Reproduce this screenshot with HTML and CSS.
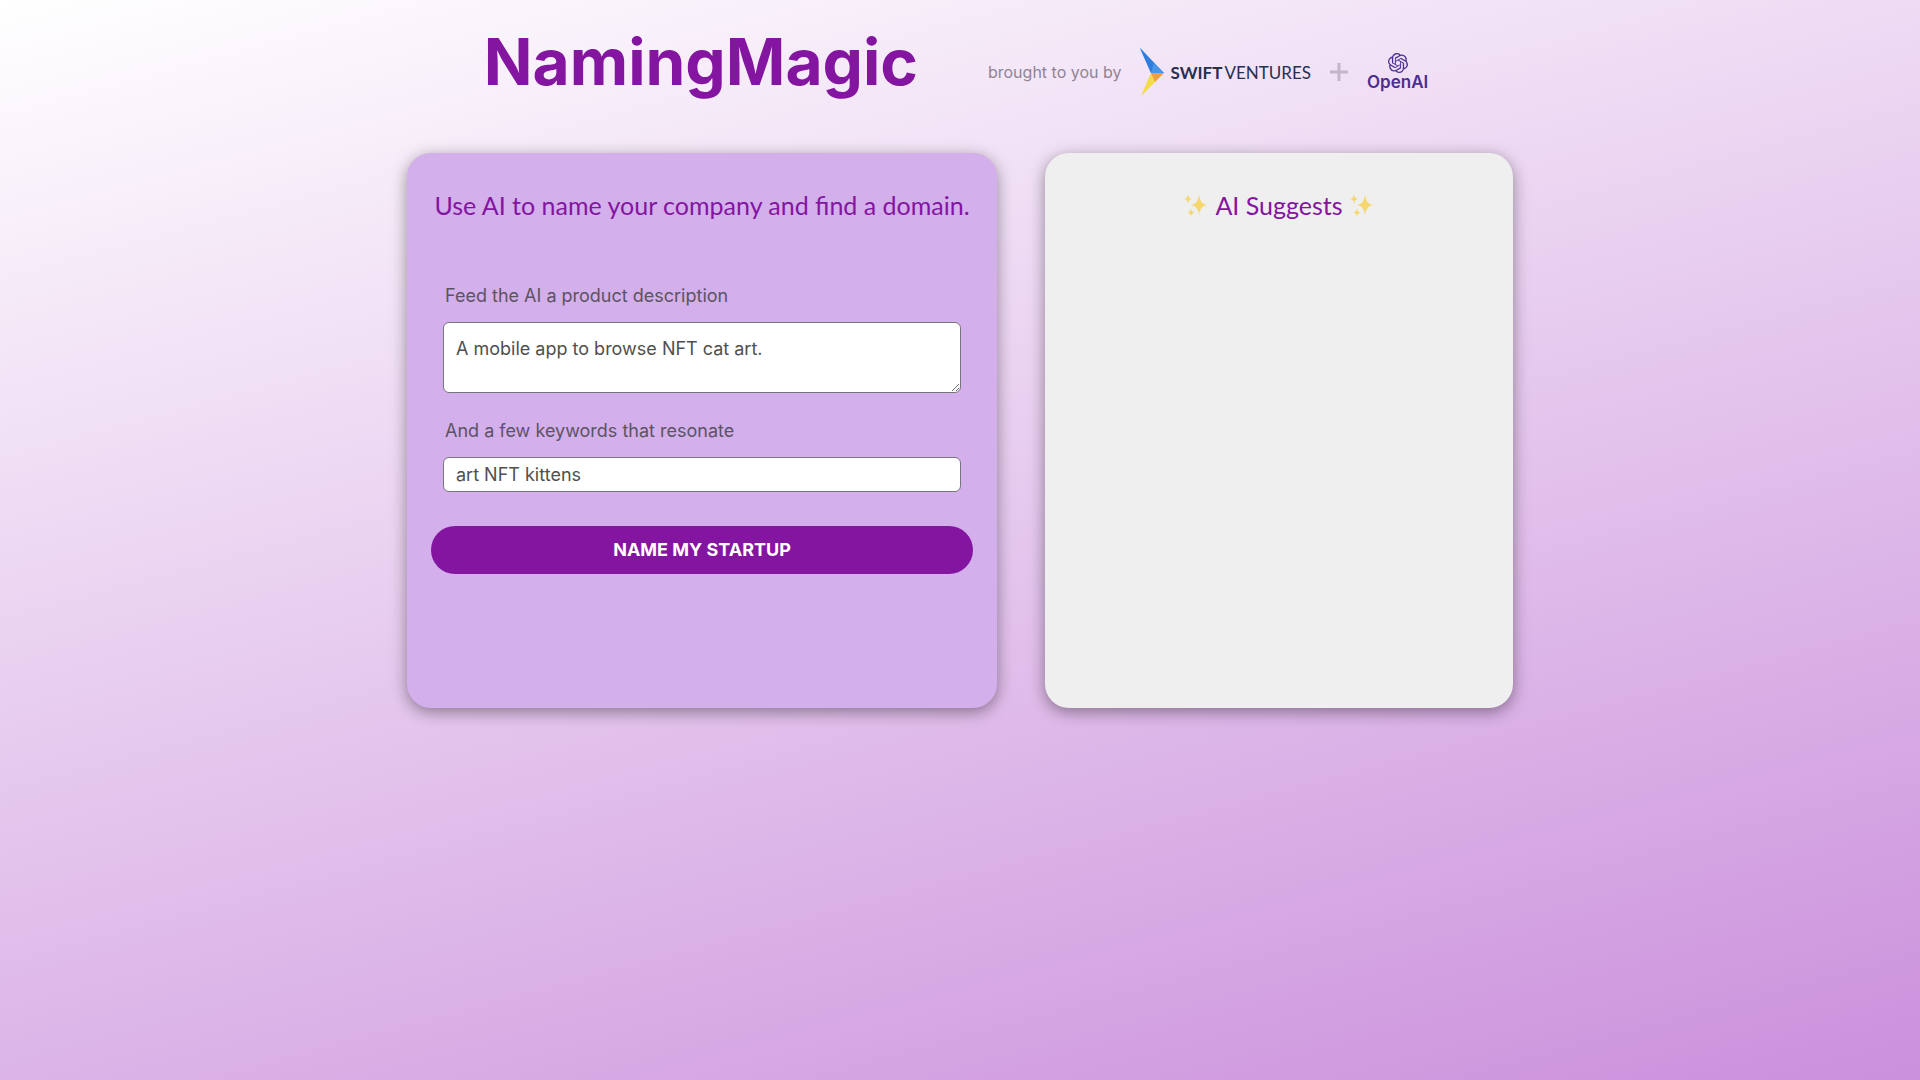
FILE: index.html
```html
<!DOCTYPE html>
<html lang="en">
<head>
<meta charset="utf-8">
<meta name="viewport" content="width=device-width, initial-scale=1">
<title>NamingMagic</title>
<link rel="stylesheet" href="styles.css">
</head>
<body>
<svg class="defs" aria-hidden="true">
  <symbol id="sparkles" viewBox="0 0 24 24">
    <path fill="#f5d76e" d="M15 1Q15.500 11 23 12Q15.500 13 15 23Q14.500 13 7 12Q14.500 11 15 1ZM4 1Q4.300 5.300 8 6Q4.300 6.700 4 11Q3.700 6.700 0 6Q3.700 5.300 4 1ZM7 15Q7.300 18.800 10.500 19.500Q7.300 20.200 7 24Q6.700 20.200 3.500 19.500Q6.700 18.800 7 15Z"/>
  </symbol>
</svg>
<div class="page">
  <header class="header">
    <h1 class="brand">NamingMagic</h1>
    <div class="sponsors">
      <span class="byline">brought to you by</span>
      <a class="swift" href="#">
        <svg class="swift-mark" viewBox="0 0 24 48" aria-hidden="true">
          <path fill="#3b8ae6" d="M0 0L24 25H11Z"/>
          <path fill="#2f7ddd" d="M0 0L14 15L11 25Z"/>
          <path fill="#4796ea" d="M14 15L24 25H11Z"/>
          <path fill="#f3dc45" d="M11 25L1 48L16 33Z"/>
          <path fill="#e9a23c" d="M11 25H24L15 34Z"/>
        </svg>
        <span class="swift-name"><b>SWIFT</b><span>VENTURES</span></span>
      </a>
      <svg class="plus" viewBox="0 0 18 18" aria-hidden="true"><path d="M9 0V18M0 9H18" stroke="#c4b5ca" stroke-width="3"/></svg>
      <a class="openai" href="#">
        <svg class="openai-mark" viewBox="0 0 24 24" aria-hidden="true"><path fill="currentColor" d="M22.2819 9.8211a5.9847 5.9847 0 0 0-.5157-4.9108 6.0462 6.0462 0 0 0-6.5098-2.9A6.0651 6.0651 0 0 0 4.9807 4.1818a5.9847 5.9847 0 0 0-3.9977 2.9 6.0462 6.0462 0 0 0 .7427 7.0966 5.98 5.98 0 0 0 .511 4.9107 6.051 6.051 0 0 0 6.5146 2.9001A5.9847 5.9847 0 0 0 13.2599 24a6.0557 6.0557 0 0 0 5.7718-4.2058 5.9894 5.9894 0 0 0 3.9977-2.9001 6.0557 6.0557 0 0 0-.7475-7.0729zm-9.022 12.6081a4.4755 4.4755 0 0 1-2.8764-1.0408l.1419-.0804 4.7783-2.7582a.7948.7948 0 0 0 .3927-.6813v-6.7369l2.02 1.1686a.071.071 0 0 1 .038.052v5.5826a4.504 4.504 0 0 1-4.4945 4.4944zm-9.6607-4.1254a4.4708 4.4708 0 0 1-.5346-3.0137l.142.0852 4.783 2.7582a.7712.7712 0 0 0 .7806 0l5.8428-3.3685v2.3324a.0804.0804 0 0 1-.0332.0615L9.74 19.9502a4.4992 4.4992 0 0 1-6.1408-1.6464zM2.3408 7.8956a4.485 4.485 0 0 1 2.3655-1.9728V11.6a.7664.7664 0 0 0 .3879.6765l5.8144 3.3543-2.0201 1.1685a.0757.0757 0 0 1-.071 0l-4.8303-2.7865A4.504 4.504 0 0 1 2.3408 7.872zm16.5963 3.8558L13.1038 8.364 15.1192 7.2a.0757.0757 0 0 1 .071 0l4.8303 2.7913a4.4944 4.4944 0 0 1-.6765 8.1042v-5.6772a.79.79 0 0 0-.407-.667zm2.0107-3.0231l-.142-.0852-4.7735-2.7818a.7759.7759 0 0 0-.7854 0L9.409 9.2297V6.8974a.0662.0662 0 0 1 .0284-.0615l4.8303-2.7866a4.4992 4.4992 0 0 1 6.6802 4.66zM8.3065 12.863l-2.02-1.1638a.0804.0804 0 0 1-.038-.0567V6.0742a4.4992 4.4992 0 0 1 7.3757-3.4537l-.142.0805L8.704 5.459a.7948.7948 0 0 0-.3927.6813zm1.0976-2.3654l2.602-1.4998 2.6069 1.4998v2.9994l-2.5974 1.4997-2.6067-1.4997Z"/></svg>
        <span class="openai-name">OpenAI</span>
      </a>
    </div>
  </header>
  <main class="cards">
    <section class="card card-form">
      <h2 class="heading">Use AI to name your company and find a domain.</h2>
      <form class="form">
        <div class="field">
          <label for="description">Feed the AI a product description</label>
          <textarea class="control description" id="description">A mobile app to browse NFT cat art.</textarea>
        </div>
        <div class="field">
          <label for="keywords">And a few keywords that resonate</label>
          <input class="control keywords" id="keywords" type="text" value="art NFT kittens">
        </div>
        <button class="submit" type="submit">NAME MY STARTUP</button>
      </form>
    </section>
    <section class="card card-results">
      <h2 class="heading suggests">
        <svg class="sparkle" aria-hidden="true"><use href="#sparkles"/></svg>
        <span>AI Suggests</span>
        <svg class="sparkle" aria-hidden="true"><use href="#sparkles"/></svg>
      </h2>
    </section>
  </main>
</div>
</body>
</html>
```
FILE: styles.css
```css
* { box-sizing: border-box; }

body {
  margin: 0;
  min-height: 100vh;
  background: linear-gradient(165deg, #ffffff, #cb90dc);
  font-family: Inter, "Liberation Sans", sans-serif;
  color: #5c5364;
}

.defs { position: absolute; width: 0; height: 0; }

.page {
  max-width: 1106px;
  margin: 0 auto;
}

.header {
  display: flex;
  align-items: center;
  justify-content: center;
  gap: 70px;
  padding: 22px 8px 51px 0;
}

.brand {
  margin: 0;
  font-size: 64px;
  line-height: 80px;
  font-weight: 700;
  color: #8315a0;
}

.sponsors {
  display: flex;
  align-items: center;
  gap: 19px;
  padding-top: 20px;
}

.byline { font-size: 16px; color: #8f8395; }

.swift {
  display: flex;
  align-items: center;
  gap: 6px;
  color: #27304f;
  text-decoration: none;
}

.swift-mark { width: 24px; height: 48px; }

.swift-name {
  display: flex;
  gap: 2px;
  font-family: Lato, sans-serif;
  font-size: 17px;
}

.plus { width: 18px; height: 18px; }

.openai {
  display: flex;
  flex-direction: column;
  align-items: center;
  color: #4b2e8f;
  text-decoration: none;
}

.openai-mark { width: 20px; height: 20px; }

.openai-name {
  font-size: 17px;
  line-height: 18px;
  font-weight: 600;
}

.cards {
  display: grid;
  grid-template-columns: 590fr 468fr;
  gap: 48px;
}

.card {
  min-height: 555px;
  padding: 36px 24px;
  border-radius: 24px;
  box-shadow: 0 4px 16px rgba(0, 0, 0, 0.4);
}

.card-form { background: #d3afeb; }
.card-results { background: #efefef; }

.heading {
  margin: 0;
  font-family: Lato, sans-serif;
  font-size: 25px;
  line-height: 32px;
  font-weight: 400;
  text-align: center;
  color: #8315a0;
}

.suggests {
  display: flex;
  align-items: center;
  justify-content: center;
  gap: 7px;
}

.sparkle { width: 24px; height: 24px; }

.form { padding-top: 61px; }

.field {
  display: flex;
  flex-direction: column;
  gap: 12px;
  margin: 0 12px 24px;
  font-size: 18px;
  line-height: 28px;
}

.field label { padding-left: 2px; }

.control {
  width: 100%;
  border: 1px solid #767676;
  border-radius: 6px;
  background: #fff;
  padding: 0 12px;
  font: inherit;
  color: #4f4f4f;
}

.description { height: 71px; padding: 12px; }
.keywords { height: 35px; }

.submit {
  width: 100%;
  height: 48px;
  margin-top: 10px;
  border: 0;
  border-radius: 24px;
  background: #8315a0;
  font: 700 18px/24px Inter, sans-serif;
  color: #fff;
}

@media (max-width: 900px) {
  .header { flex-wrap: wrap; gap: 12px; }
  .cards { grid-template-columns: 1fr; }
}
```
